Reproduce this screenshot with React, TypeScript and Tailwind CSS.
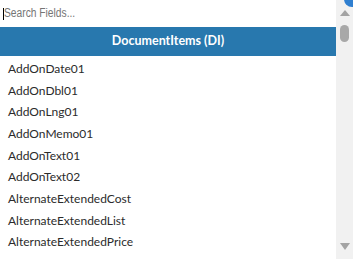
import { useState } from 'react';

const FIELDS = [
  'AddOnDate01',
  'AddOnDbl01',
  'AddOnLng01',
  'AddOnMemo01',
  'AddOnText01',
  'AddOnText02',
  'AlternateExtendedCost',
  'AlternateExtendedList',
  'AlternateExtendedPrice',
];

function Scrollbar() {
  return (
    <div className="relative w-[17px] h-full bg-[#f1f1f1] flex flex-col items-center">
      {/* up arrow */}
      <div className="mt-[10px] w-0 h-0 border-l-[5px] border-r-[5px] border-b-[6px] border-l-transparent border-r-transparent border-b-[#a3a3a3]" />
      {/* thumb */}
      <div className="mt-[9px] w-[9px] h-[17px] rounded-full bg-[#a8a8a8]" />
      <div className="flex-1" />
      {/* down arrow */}
      <div className="mb-[9px] w-0 h-0 border-l-[5px] border-r-[5px] border-t-[7px] border-l-transparent border-r-transparent border-t-[#a3a3a3]" />
    </div>
  );
}

export default function App() {
  const [query, setQuery] = useState('');
  const items = FIELDS.filter((f) => f.toLowerCase().includes(query.toLowerCase()));

  return (
    <div className="relative w-[353px] h-[259px] overflow-hidden bg-white flex">
      <div className="w-[336px] flex flex-col">
        {/* Search */}
        <div className="h-[27px] flex items-center pl-[3px] overflow-hidden">
          <div className="w-px h-[12px] bg-black shrink-0" />
          {/* narrow face: Arial Narrow isn't installed, so squeeze Liberation Sans */}
          <input
            value={query}
            onChange={(e) => setQuery(e.target.value)}
            placeholder="Search Fields..."
            className="w-[400px] shrink-0 origin-left scale-x-[0.82] outline-none bg-transparent text-[12.5px] text-black placeholder:text-[#757575] caret-transparent"
            style={{ fontFamily: '"Liberation Sans", Arial, sans-serif' }}
          />
        </div>

        {/* Group header */}
        <div
          className="h-[29px] bg-[#2878ae] flex items-center justify-center text-white font-bold text-[12.5px]"
          style={{ fontFamily: 'Lato, sans-serif' }}
        >
          DocumentItems (DI)
        </div>

        {/* Field list */}
        <div className="pt-[2px]" style={{ fontFamily: 'Lato, sans-serif' }}>
          {items.map((f) => (
            <div
              key={f}
              className="h-[21.7px] flex items-center pl-[8px] text-[12px] text-[#2b2b2b]"
            >
              {f}
            </div>
          ))}
        </div>
      </div>

      <Scrollbar />

      {/* badge peeking in at the corner */}
      <div className="absolute -top-[9px] right-[-7px] w-[16px] h-[16px] rounded-full bg-[#2f7fd0]" />
    </div>
  );
}
